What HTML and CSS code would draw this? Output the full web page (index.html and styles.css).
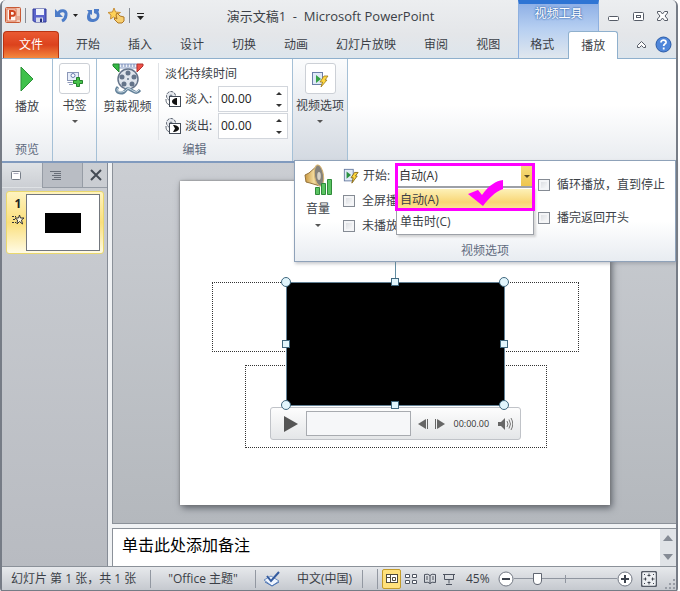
FILE: index.html
```html
<!DOCTYPE html>
<html lang="zh-CN">
<head>
<meta charset="utf-8">
<title>演示文稿1 - Microsoft PowerPoint</title>
<link rel="stylesheet" href="styles.css">
</head>
<body>
<div class="window">
  <header class="header">
    <div class="context-group"><span>视频工具</span></div>
    <div class="titlebar">
      <div class="quick">
        <svg class="app-icon" width="17" height="17" viewBox="0 0 17 17" aria-hidden="true"><rect x=".5" y=".5" width="15" height="15" rx="1" fill="#f3cdbb" stroke="#c75a35"/><rect x="2" y="2" width="9" height="12" fill="#fff6f0" stroke="#d9714e"/><path d="M5 12.500V4h2.500a2.400 2.400 0 0 1 0 4.800H5" fill="none" stroke="#cf4520" stroke-width="2"/><path d="M12 10h3M12 12h3" stroke="#d98466"/></svg>
        <i class="bar"></i>
        <button class="tool" aria-label="保存"><svg width="15" height="15" viewBox="0 0 15 15"><path d="M1 1h13v13H2.500L1 12.500z" fill="#5a64cc" stroke="#303a98"/><path d="M4 1h8v6H4z" fill="#eef2fb"/><path d="M4 9.500h7V14H4z" fill="#d7dcec"/><path d="M8 10.500h2V14H8z" fill="#28307c"/></svg></button>
        <button class="tool undo" aria-label="撤消"><svg width="15" height="15" viewBox="0 0 15 15"><path d="M4 6C6 1 13 2 12 7c-.3 3-2 5-4 6" fill="none" stroke="#4c7cc8" stroke-width="3"/><path d="M1 1v8h8z" fill="#4c7cc8"/></svg><svg width="7" height="4" viewBox="0 0 7 4"><path d="M1 0h5L3.500 3z" fill="#222"/></svg></button>
        <button class="tool redo" aria-label="重复"><svg width="15" height="15" viewBox="0 0 15 15"><path d="M1 2h5v5L4.500 6C3.500 9 5 11 7.500 11S12 8 10 5.500V2c5 2 5 11-2.500 12S0 8 2.500 4z" fill="#4c7cc8"/><path d="M8 1h5v2l-3 3-2-1z" fill="#4c7cc8"/></svg></button>
        <button class="tool star" aria-label="动作"><svg width="18" height="17" viewBox="0 0 18 17"><path d="M6 1l1.500 4 5 .5-4 2.500 1 4-4-2-3 2 .500-4L0 5.500 4.500 5z" fill="#ffd257" stroke="#c89038"/><path d="M8 8l1-2 3 3 4 1v4l-2 2h-4l-4-4 1-1 2 1z" fill="#f8cf70" stroke="#ae7726"/></svg></button>
        <i class="bar"></i>
        <button class="tool more" aria-label="自定义快速访问工具栏"><svg width="9" height="8" viewBox="0 0 9 8"><path d="M1 1.500h7" stroke="#222" stroke-width="1"/><path d="M1 4h7L4.500 8z" fill="#222"/></svg></button>
      </div>
      <h1>演示文稿1&nbsp; -&nbsp; Microsoft PowerPoint</h1>
    </div>
    <div class="win-controls">
      <button aria-label="最小化"><svg width="13" height="12" viewBox="0 0 13 12"><rect x="1.500" y="6.500" width="10" height="4" rx="1" fill="#fff" stroke="#555b66"/></svg></button>
      <button aria-label="还原"><svg width="13" height="12" viewBox="0 0 13 12"><rect x="1.500" y="2.500" width="10" height="8" rx="1" fill="#fff" stroke="#555b66"/><rect x="4.500" y="5.500" width="4" height="2" fill="#fff" stroke="#555b66"/></svg></button>
      <button aria-label="关闭"><svg width="13" height="12" viewBox="0 0 13 12"><path d="M1.500 1.500h3L6.500 4l2-2.500h3v1.500L9 6l2.500 3v1.500h-3L6.500 8l-2 2.500h-3V9L4 6 1.500 3z" fill="#fff" stroke="#555b66"/></svg></button>
    </div>
    <nav class="tabs">
      <button class="file">文件</button>
      <button>开始</button><button>插入</button><button>设计</button><button>切换</button><button>动画</button><button>幻灯片放映</button><button>审阅</button><button>视图</button>
      <button class="format">格式</button><button class="active">播放</button>
      <span class="tab-tools">
        <button aria-label="折叠功能区"><svg width="11" height="9" viewBox="0 0 11 9"><path d="M1.500 5.500l4-4 4 4v2h-2l-2-2-2 2h-2z" fill="#fff" stroke="#555b66"/></svg></button>
        <button aria-label="帮助"><svg width="17" height="17" viewBox="0 0 17 17"><circle cx="8.500" cy="8.500" r="7.500" fill="#4f86da" stroke="#2b5ca8"/><path d="M6 6.500c0-3.500 5.500-3 5 0-.3 1.500-2.300 1.500-2.300 3.500M8.700 11.500v2" fill="none" stroke="#fff" stroke-width="1.800"/></svg></button>
      </span>
    </nav>
  </header>

  <section class="ribbon">
    <div class="group preview">
      <button class="big"><svg width="32" height="32" viewBox="0 0 32 32"><path d="M10 4l12 12-12 12z" fill="#3fc14b" stroke="#2a9136"/></svg><span>播放</span></button>
      <h2>预览</h2>
    </div>
    <div class="group bookmark">
      <button class="big"><span class="frame"><svg width="18" height="18" viewBox="0 0 18 18"><rect x="1.500" y="2.500" width="11" height="8" fill="#e8eefa" stroke="#8c98b8"/><circle cx="7" cy="5.500" r="2" fill="#fff" stroke="#6b7db0"/><path d="M1.500 12.500h5M3 14.500h4" stroke="#8c98b8"/><path d="M10.500 7.500h3v3h3v3h-3v3h-3v-3h-3v-3h3z" fill="#47c24a" stroke="#23812d"/></svg></span><span>书签</span><i class="arrow"></i></button>
    </div>
    <div class="group edit">
      <div class="edit-body">
        <button class="big trim"><svg width="32" height="32" viewBox="0 0 32 32"><path d="M7 1h18v4H7z" fill="#eef1f8" stroke="#8da0c8"/><path d="M10 1v3M13 1v3M16 1v3M19 1v3M22 1v3" stroke="#7387b4"/><path d="M1 1h6v8L1 3z" fill="#34b944" stroke="#228030"/><path d="M31 1h-6v8l6-6z" fill="#ee5148" stroke="#b2322d"/><circle cx="16" cy="16" r="10" fill="#dfe5ed" stroke="#66758b" stroke-width="1.500"/><g fill="#64748a"><circle cx="16" cy="10" r="2.500"/><circle cx="22" cy="14" r="2.500"/><circle cx="20" cy="21" r="2.500"/><circle cx="12" cy="21" r="2.500"/><circle cx="10" cy="14" r="2.500"/><circle cx="16" cy="16" r="1"/></g><path d="M6 24c-3 3-1 6 3 6 6 0 4-6 8-4 5 2 7 6 11 1" fill="none" stroke="#66849c" stroke-width="3"/><path d="M6 25c-2 2-1 4 3 4 6 0 5-5 9-3 4 2 6 5 9 1" fill="none" stroke="#d3e1ea"/></svg><span>剪裁视频</span></button>
        <div class="fade">
          <p>淡化持续时间</p>
          <div class="fade-row"><svg width="16" height="16" viewBox="0 0 16 16"><circle cx="6" cy="5" r="4.500" fill="#e6e9ee" stroke="#59616e" stroke-dasharray="3 1"/><circle cx="6" cy="5" r="1.500" fill="#77808d"/><path d="M1 8c0 4 1 5 4 6" fill="none" stroke="#59616e"/><rect x="4.500" y="5.500" width="11" height="10" fill="#fff" stroke="#444c58"/><path d="M12 7v7c-2 0-5-1.500-5-3.500S10 7 12 7z" fill="#111"/></svg><label for="fade-in">淡入:</label><span class="spin"><input id="fade-in" type="text" value="00.00"><span class="steps"><button aria-label="增加淡入"></button><button class="down" aria-label="减少淡入"></button></span></span></div>
          <div class="fade-row"><svg width="16" height="16" viewBox="0 0 16 16"><circle cx="6" cy="5" r="4.500" fill="#e6e9ee" stroke="#59616e" stroke-dasharray="3 1"/><circle cx="6" cy="5" r="1.500" fill="#77808d"/><path d="M1 8c0 4 1 5 4 6" fill="none" stroke="#59616e"/><rect x="4.500" y="5.500" width="11" height="10" fill="#fff" stroke="#444c58"/><path d="M8 7c3 0 6 1.500 6 3.500S11 14 8 14l2-3.500z" fill="#111"/></svg><label for="fade-out">淡出:</label><span class="spin"><input id="fade-out" type="text" value="00.00"><span class="steps"><button aria-label="增加淡出"></button><button class="down" aria-label="减少淡出"></button></span></span></div>
        </div>
      </div>
      <h2>编辑</h2>
    </div>
    <div class="group options">
      <button class="big"><span class="frame"><svg width="18" height="18" viewBox="0 0 18 18"><rect x="1.500" y="2.500" width="10" height="12" fill="#dfe9f7" stroke="#6c7fa8"/><path d="M5 5l5 4-5 4z" fill="#35a246"/><path d="M13 6h4l-3 4h2l-6 7 1.500-5H9z" fill="#ffd83f" stroke="#9c7a20" stroke-width=".8"/></svg></span><span>视频选项</span><i class="arrow"></i></button>
    </div>

    <section class="popup">
      <div class="popup-body">
        <button class="volume"><svg width="30" height="32" viewBox="0 0 30 32"><defs><linearGradient id="brass"><stop offset="0" stop-color="#c9973f"/><stop offset=".5" stop-color="#f4dda0"/><stop offset="1" stop-color="#a87b38"/></linearGradient></defs><path d="M2 11l4-2 9-8c5 3 7 16 2 21L7 19 3 18z" fill="url(#brass)" stroke="#94733c"/><ellipse cx="16" cy="11.500" rx="4.500" ry="10.500" fill="#85827b" stroke="#d8b878" transform="rotate(-8 16 11.500)"/><ellipse cx="16" cy="12" rx="1.800" ry="4" fill="#d6d2c8"/><path d="M12.500 23.500h4v7h-4zM18.500 19.500h4v11h-4zM24.500 15.500h4v15h-4z" fill="#5cc463" stroke="#2f8a3a"/></svg><span>音量</span><i class="arrow"></i></button>
        <div class="settings">
          <div class="start-row"><svg width="16" height="16" viewBox="0 0 18 18"><rect x="1.500" y="1.500" width="10" height="13" fill="#dfe9f7" stroke="#65789e"/><path d="M4 4l5 4-5 4z" fill="#299141"/><path d="M13 5h4l-3 4h2l-6 8 1.500-6H9z" fill="#ffd83f" stroke="#856817"/></svg><label for="start">开始:</label>
            <div class="combo">
              <select id="start"><option selected>自动(A)</option><option>单击时(C)</option></select>
              <ul class="menu"><li class="picked">自动(A)</li><li>单击时(C)</li></ul>
              <i class="highlight"></i>
              <svg class="tick" width="38" height="30" viewBox="0 0 38 30"><path d="M1 16l10-4 4 5C22 7 29 3 36 2v9C28 14 22 20 16 28z" fill="#f0f"/></svg>
            </div>
          </div>
          <label class="check"><input type="checkbox"><span>全屏播</span></label>
          <label class="check"><input type="checkbox"><span>未播放</span></label>
        </div>
        <div class="more-settings">
          <label class="check"><input type="checkbox">循环播放，直到停止</label>
          <label class="check"><input type="checkbox">播完返回开头</label>
        </div>
      </div>
      <h2>视频选项</h2>
    </section>
  </section>

  <main class="workspace">
    <aside class="outline">
      <div class="outline-tabs">
        <button class="on" aria-label="幻灯片"><svg width="12" height="11" viewBox="0 0 12 11"><rect x="1.500" y="1.500" width="9" height="8" rx="1" fill="#fff" stroke="#777e88"/><path d="M3.500 3.500h5" stroke="#aab"/></svg></button>
        <button aria-label="大纲"><svg width="13" height="11" viewBox="0 0 13 11"><path d="M0 1.500h11M4 3.500h7M2 5.500h9M4 7.500h7M2 9.500h9" stroke="#686e78"/></svg></button>
        <button class="close" aria-label="关闭窗格"><svg width="12" height="12" viewBox="0 0 12 12"><path d="M1 1l10 10M11 1L1 11" stroke="#444a54" stroke-width="2"/></svg></button>
      </div>
      <button class="thumb" aria-label="幻灯片 1"><span class="thumb-info"><b>1</b><svg width="13" height="11" viewBox="0 0 13 11"><path d="M7.500 1l1 3H12L9.500 6l1 4-3-2.500L5 10l.5-4L3 4h3.500z" fill="#fff8dc" stroke="#333"/><path d="M0 2.500h4M1 5.500h2M0 8.500h4" stroke="#333" stroke-dasharray="2 1"/></svg></span><span class="thumb-slide"><i></i></span></button>
    </aside>
    <section class="editor">
      <div class="stage">
        <div class="slide">
          <div class="holder title-holder"></div>
          <div class="holder sub-holder"></div>
          <div class="player">
            <button class="play" aria-label="播放"><svg width="16" height="18" viewBox="0 0 16 18"><path d="M1 1l14 8-14 8z" fill="#555"/></svg></button>
            <span class="track"></span>
            <button aria-label="后退"><svg width="11" height="10" viewBox="0 0 11 10"><path d="M8 0v10L0 5z" fill="#666"/><path d="M9.500 0v10" stroke="#666"/></svg></button>
            <button class="forward" aria-label="前进"><svg width="11" height="10" viewBox="0 0 11 10"><path d="M3 0v10l8-5z" fill="#666"/><path d="M1.500 0v10" stroke="#666"/></svg></button>
            <time>00:00.00</time>
            <button class="mute" aria-label="静音"><svg width="16" height="14" viewBox="0 0 16 14"><path d="M1 5h3l4-4v12L4 9H1z" fill="#666"/><path d="M10 4q2 3 0 6M12 2.500q3 4.500 0 9M14 1q3.500 6 0 12" fill="none" stroke="#777"/></svg></button>
          </div>
          <div class="video">
            <i class="stem"></i>
            <i class="h c tl"></i><i class="h tc"></i><i class="h c tr"></i><i class="h ml"></i><i class="h mr"></i><i class="h c bl"></i><i class="h bc"></i><i class="h c br"></i>
          </div>
        </div>
      </div>
      <div class="notes"><p>单击此处添加备注</p><div class="scroll"><button aria-label="向上滚动"></button><button class="down" aria-label="向下滚动"></button></div></div>
    </section>
  </main>

  <footer class="status">
    <span class="cell count">幻灯片 第 1 张，共 1 张</span>
    <span class="cell theme">"Office 主题"</span>
    <span class="cell lang"><svg width="18" height="16" viewBox="0 0 18 16"><path d="M1 9l7-4 8 5-7 5z" fill="#eef5ff" stroke="#6f8fc0"/><path d="M2 11l7 4 7-4" fill="none" stroke="#4b74b5"/><path d="M4 5l4 5 8-9" fill="none" stroke="#335b9f" stroke-width="2"/></svg>中文(中国)</span>
    <span class="views">
      <button class="on" aria-label="普通视图"><svg width="12" height="11" viewBox="0 0 12 11"><rect x=".5" y="1.500" width="11" height="8" fill="#fff" stroke="#514c3b"/><path d="M4.500 1.500v8M6.500 4.500h3v3h-3zM1 4.500h3" fill="none" stroke="#514c3b"/></svg></button>
      <button aria-label="幻灯片浏览"><svg width="12" height="11" viewBox="0 0 12 11"><path d="M.5 1.500h4v3h-4zM7.500 1.500h4v3h-4zM.5 7.500h4v3h-4zM7.500 7.500h4v3h-4z" fill="#fff" stroke="#4e5460"/></svg></button>
      <button aria-label="阅读视图"><svg width="12" height="12" viewBox="0 0 12 12"><path d="M.5 1.500q4-1 5.500 1 1.500-2 5.500-1v8q-4-1-5.500 1-1.500-2-5.500-1zM6 2v9M2 4h2M2 6h2M8 4h2M8 6h2" fill="none" stroke="#4e5460"/></svg></button>
      <button aria-label="幻灯片放映"><svg width="12" height="12" viewBox="0 0 12 12"><path d="M0 1.500h12M1.500 1.500v5h9v-5M6 6.500v4M3 11.500h6" fill="none" stroke="#4e5460"/></svg></button>
    </span>
    <label class="percent" for="zoom">45%</label>
    <button class="round" aria-label="缩小"><svg width="16" height="16" viewBox="0 0 16 16"><circle cx="8" cy="8" r="7" fill="#fff" stroke="#717782"/><path d="M4 8h8" stroke="#3e444e" stroke-width="2"/></svg></button>
    <input id="zoom" class="zoom" type="range" min="0" max="100" value="20">
    <button class="round" aria-label="放大"><svg width="16" height="16" viewBox="0 0 16 16"><circle cx="8" cy="8" r="7" fill="#fff" stroke="#717782"/><path d="M4 8h8M8 4v8" stroke="#3e444e" stroke-width="2"/></svg></button>
    <button class="fit" aria-label="适应窗口"><svg width="16" height="16" viewBox="0 0 16 16"><rect x=".5" y=".5" width="15" height="15" rx="2" fill="#eef0f3" stroke="#555b66" stroke-width="1.500"/><path d="M8 2.500v3M6.500 4.500h3M8 10.500v3M6.500 11.500h3M2.500 8h3M4.500 6.500v3M10.500 8h3M11.500 6.500v3" stroke="#3e444e"/><path d="M3 3h1v1H3zM12 3h1v1h-1zM3 12h1v1H3zM12 12h1v1h-1z" fill="#3e444e"/></svg></button>
    <svg class="grip" width="11" height="11" viewBox="0 0 11 11"><path d="M8 0h2v2H8zM4 4h2v2H4zM8 4h2v2H8zM0 8h2v2H0zM4 8h2v2H4zM8 8h2v2H8z" fill="#989da6"/></svg>
  </footer>
</div>
</body>
</html>
```
FILE: styles.css
```css
* { box-sizing: border-box; }
body {
  margin: 0;
  background: #fff;
  color: #3b3f47;
  font: 12px/16px "Open Sans", "Noto Sans CJK SC", sans-serif;
}
button {
  margin: 0;
  padding: 0;
  border: 0;
  background: none;
  color: inherit;
  font: inherit;
}
svg { display: block; flex: none; }
h1, h2, p, ul { margin: 0; padding: 0; font: inherit; list-style: none; }
.window {
  display: flex;
  flex-direction: column;
  min-height: 100vh;
  margin-right: 2px;
  border: solid #767c86;
  border-width: 0 2px 2px 2px;
  border-radius: 6px 6px 4px 4px;
  background: #dfe2e6;
}

/* header */
.header {
  display: grid;
  grid-template: 31px 27px / 1fr 81px 77px;
  border-bottom: 1px solid #8fb0cd;
  border-radius: 5px 5px 0 0;
  background: linear-gradient(#eceef0, #e4e6e9 60%, #dde5ec);
}
.context-group {
  grid-area: 1 / 2 / 3 / 3;
  padding-top: 2px;
  border: solid #8eb0df;
  border-width: 0 1px;
  border-top: 4px solid #2e74d4;
  background: linear-gradient(#8fb0e6, #b6cff1 45%, #e0e7ee);
  color: #fff;
  text-align: center;
  text-shadow: 0 0 2px #3467ae, 0 0 2px #3467ae;
}
.titlebar { grid-area: 1 / 1; display: grid; grid-template-columns: 141px 1fr; align-items: center; }
.titlebar h1 { justify-self: center; font-size: 13px; white-space: nowrap; }
.quick { display: flex; align-items: center; padding-left: 3px; }
.bar { flex: none; width: 1px; height: 15px; margin: 0 6px 0 3px; background: #858b94; }
.tool { display: flex; align-items: center; gap: 3px; margin-right: 7px; }
.star { margin-right: 0; }
.more { margin: 0; }
.win-controls { grid-area: 1 / 3; display: flex; align-items: center; justify-content: space-between; padding: 0 7px 0 8px; }
.tabs { grid-area: 2 / 1 / 3 / 4; display: flex; }
.tabs button { padding: 0 14px; }
.tabs .file {
  margin: 0 3px 0 1px;
  padding: 0 15px;
  border: 1px solid #b93312;
  border-bottom: 0;
  border-radius: 4px 4px 0 0;
  background: linear-gradient(#ea5a32, #dc421d 50%, #f4893f);
  color: #fff;
}
.tabs .format { margin-left: 2px; }
.tabs .active {
  margin: 0 0 -1px;
  padding: 0 12px;
  border: 1px solid #8fb0cd;
  border-bottom: 0;
  border-radius: 3px 3px 0 0;
  background: #fff;
}
.tab-tools { display: flex; align-items: center; gap: 8px; margin-left: auto; padding-right: 4px; }
.tab-tools .tabs button, .tabs .tab-tools button { padding: 0; }

/* ribbon */
.ribbon {
  position: relative;
  z-index: 2;
  display: flex;
  min-height: 104px;
  border-bottom: 2px solid #809abe;
  background: linear-gradient(#fff 45%, #e9ecf0);
}
.group { display: flex; flex-direction: column; justify-content: space-between; padding: 4px 0 3px; border-right: 1px solid #a5c0d6; }
.group h2, .popup h2 { color: #5f6b7e; text-align: center; }
.big { display: flex; flex-direction: column; align-items: center; gap: 4px; }
.frame { display: grid; place-items: center; width: 31px; height: 31px; border: 1px solid #ccd0d6; border-radius: 3px; background: #fff; }
.arrow { margin-top: 2px; border: 3px solid transparent; border-top-color: #555; border-bottom: 0; }
.preview { width: 51px; }
.bookmark { width: 44px; }
.edit { width: 196px; }
.edit-body { display: flex; }
.trim { width: 62px; border-right: 1px solid #dfe2e6; }
.fade { padding-left: 6px; }
.fade p { padding: 3px 0 4px; }
.fade-row { display: flex; align-items: center; gap: 4px; margin-bottom: 1px; }
.fade-row label { width: 29px; }
.spin { display: flex; width: 70px; height: 26px; border: 1px solid #d2d6dc; background: #fff; }
.spin input { flex: 1; min-width: 0; padding: 0 2px; border: 0; background: none; color: #222; font: inherit; }
.steps { display: grid; width: 17px; place-items: center; }
.steps button, .scroll button { border: 3px solid transparent; border-top: 0; border-bottom-color: #333; }
.steps .down { border: 3px solid transparent; border-top-color: #333; border-bottom: 0; }
.options { width: 55px; background: linear-gradient(#fbfcfd, #d3d9e1); }

/* video options menu */
.popup {
  position: absolute;
  top: calc(100% - 1px);
  right: 0;
  width: 382px;
  padding-bottom: 2px;
  border: 1px solid #8fa2b9;
  background: linear-gradient(#fff 60%, #e8ecf1);
  box-shadow: 1px 2px 3px #777d8866;
}
.popup-body { display: grid; grid-template-columns: 46px 197px 1fr; height: 82px; }
.volume { display: flex; flex-direction: column; align-items: center; gap: 5px; padding-top: 3px; align-self: start; }
.settings { display: flex; flex-direction: column; gap: 9px; padding: 4px 0 0 2px; }
.start-row { display: flex; align-items: center; height: 22px; gap: 4px; margin-bottom: -3px; }
.start-row label { width: 28px; white-space: nowrap; }
.combo { position: relative; width: 138px; margin-left: 1px; }
.combo select {
  display: block;
  width: 138px;
  height: 22px;
  padding: 0 2px;
  border: 1px solid #9c9fa6;
  border-radius: 0;
  appearance: none;
  color: #333;
  font: inherit;
  background: linear-gradient(#f5dc7c, #eec54e) right / 12px 100% no-repeat #fff;
}
.combo::after { content: ""; position: absolute; top: 10px; right: 4px; border: 3px solid transparent; border-top-color: #554824; border-bottom: 0; }
.menu { position: absolute; top: 22px; left: 0; width: 138px; padding: 1px; border: 1px solid #9da1a8; background: #fff; box-shadow: 2px 2px 2px #8885; }
.menu li { height: 22px; padding: 3px 2px; }
.menu .picked { background: linear-gradient(#fdf1b8, #f8d675 60%, #fce9a3); }
.highlight { position: absolute; z-index: 1; inset: -2px -1px auto -1px; height: 48px; border: 3px solid #f0f; }
.tick { position: absolute; z-index: 2; top: 13px; left: 71px; }
.check { display: flex; align-items: center; gap: 7px; height: 16px; white-space: nowrap; }
.check input { flex: none; appearance: none; width: 12px; height: 12px; margin: 0; border: 1px solid #858b94; background: linear-gradient(135deg, #d5d8dd, #fff); box-shadow: inset 0 0 0 2px #f4f5f7; }
.more-settings { display: flex; flex-direction: column; gap: 17px; padding-top: 16px; }

/* workspace */
.workspace { flex: 1; display: grid; grid-template-columns: 106px 1fr; gap: 4px; background: #f0f2f4; }
.outline { border-right: 1px solid #868c96; background: linear-gradient(#cbced3, #b8bbc1); }
.outline-tabs { display: grid; grid-template-columns: 40px 40px 1fr; height: 25px; }
.outline-tabs button { display: grid; align-items: center; padding-left: 7px; border: solid #969ca5; border-width: 0 0 1px 1px; background: #b9bdc4; }
.outline-tabs .on { border-color: transparent; background: linear-gradient(#dfe2e5, #cccfd4); }
.outline-tabs .close { background: none; }
.thumb {
  display: flex;
  width: 98px;
  height: 63px;
  margin: 3px 4px;
  padding: 2px 3px;
  border: 1px solid #ead86e;
  border-radius: 3px;
  background: linear-gradient(#fff3bf, #fadf7c 50%, #fffbe5);
}
.thumb-info { display: flex; flex-direction: column; align-items: center; gap: 3px; width: 16px; padding-top: 3px; color: #222; }
.thumb-info b { font: bold 12px/14px "Noto Sans", sans-serif; }
.thumb-slide { display: grid; place-items: center; flex: 1; height: 57px; border: 1px solid #73777e; background: #fff; }
.thumb-slide i { width: 36px; height: 20px; background: #000; }
.editor { display: flex; flex-direction: column; gap: 4px; min-width: 0; }
.stage { flex: 1; display: grid; place-items: center; padding: 18px; border: solid #8b9199; border-width: 0 0 1px 1px; background: linear-gradient(#cbced3, #b4b8bd); }
.slide { position: relative; width: 430px; height: 324px; background: #fff; box-shadow: 0 0 2px #777, 2px 3px 7px #5e636b; }
.holder { position: absolute; border: 1px dotted #333; }
.title-holder { top: 101px; left: 32px; width: 367px; height: 70px; }
.sub-holder { top: 184px; left: 65px; width: 302px; height: 83px; }
.video { position: absolute; top: 101px; left: 106px; width: 219px; height: 124px; border: 1px solid #628094; background: #000; }
.stem { position: absolute; bottom: 100%; left: 108px; width: 1px; height: 24px; background: #628da2; }
.h { position: absolute; width: 8px; height: 8px; border: 1px solid #40687e; background: #e1f5fc; }
.c { width: 10px; height: 10px; border-radius: 50%; }
.tl { top: -6px; left: -6px; }
.tc { top: -5px; left: 104px; }
.tr { top: -6px; right: -5px; }
.ml { top: 57px; left: -5px; }
.mr { top: 57px; right: -4px; }
.bl { bottom: -5px; left: -6px; }
.bc { bottom: -4px; left: 104px; }
.br { bottom: -5px; right: -5px; }
.player { position: absolute; top: 226px; left: 90px; display: flex; align-items: center; width: 251px; height: 33px; padding: 0 7px 0 12px; border: 1px solid #c0c3c8; border-radius: 3px; background: linear-gradient(#fdfdfd, #e4e6e8); color: #333; font-size: 9px; }
.track { width: 105px; height: 25px; margin: 0 7px; border: 1px solid #a8abb0; background: #f6f7f9; }
.forward { margin: 0 9px 0 5px; }
.mute { margin-left: auto; }
.notes { display: flex; justify-content: space-between; min-height: 38px; border: solid #8b9199; border-width: 1px 0 0 1px; background: #fff; color: #000; font-size: 16px; line-height: 24px; }
.notes p { padding: 4px 9px; }
.scroll { display: flex; flex-direction: column; align-items: center; justify-content: space-between; width: 16px; padding: 6px 0; background: #e0e3e7; }
.scroll button { width: 10px; height: 6px; border-width: 0 5px 6px; border-bottom-color: #858b95; }
.scroll .down { border: 5px solid transparent; border-top: 6px solid #858b95; border-bottom: 0; }

/* status bar */
.status { display: flex; align-items: center; height: 24px; border-top: 1px solid #8b9199; background: linear-gradient(#e7e9ec, #c5c9cf); white-space: nowrap; }
.cell { display: flex; align-items: center; height: 18px; border-right: 1px solid #9298a1; }
.count { width: 149px; padding-left: 9px; }
.theme { width: 105px; justify-content: center; }
.lang { width: 107px; gap: 16px; padding-left: 7px; }
.views { display: flex; align-items: center; margin-left: 14px; border-left: 1px solid #9298a1; padding-left: 4px; }
.views button { display: grid; place-items: center; width: 19px; height: 20px; }
.views .on { border: 1px solid #c39b2a; border-radius: 2px; background: #ffe17b; }
.percent { margin: 0 8px; }
.zoom { flex: 1; min-width: 0; height: 16px; margin: 0; appearance: none; background: linear-gradient(#8f959f, #8f959f) center / 100% 1px no-repeat, linear-gradient(#8f959f, #8f959f) center / 1px 8px no-repeat; }
.zoom::-webkit-slider-thumb { appearance: none; width: 9px; height: 12px; border: 1px solid #616772; border-radius: 1px 1px 5px 5px; background: #fff; }
.fit { margin: 0 8px; }
.grip { align-self: flex-end; }
```
